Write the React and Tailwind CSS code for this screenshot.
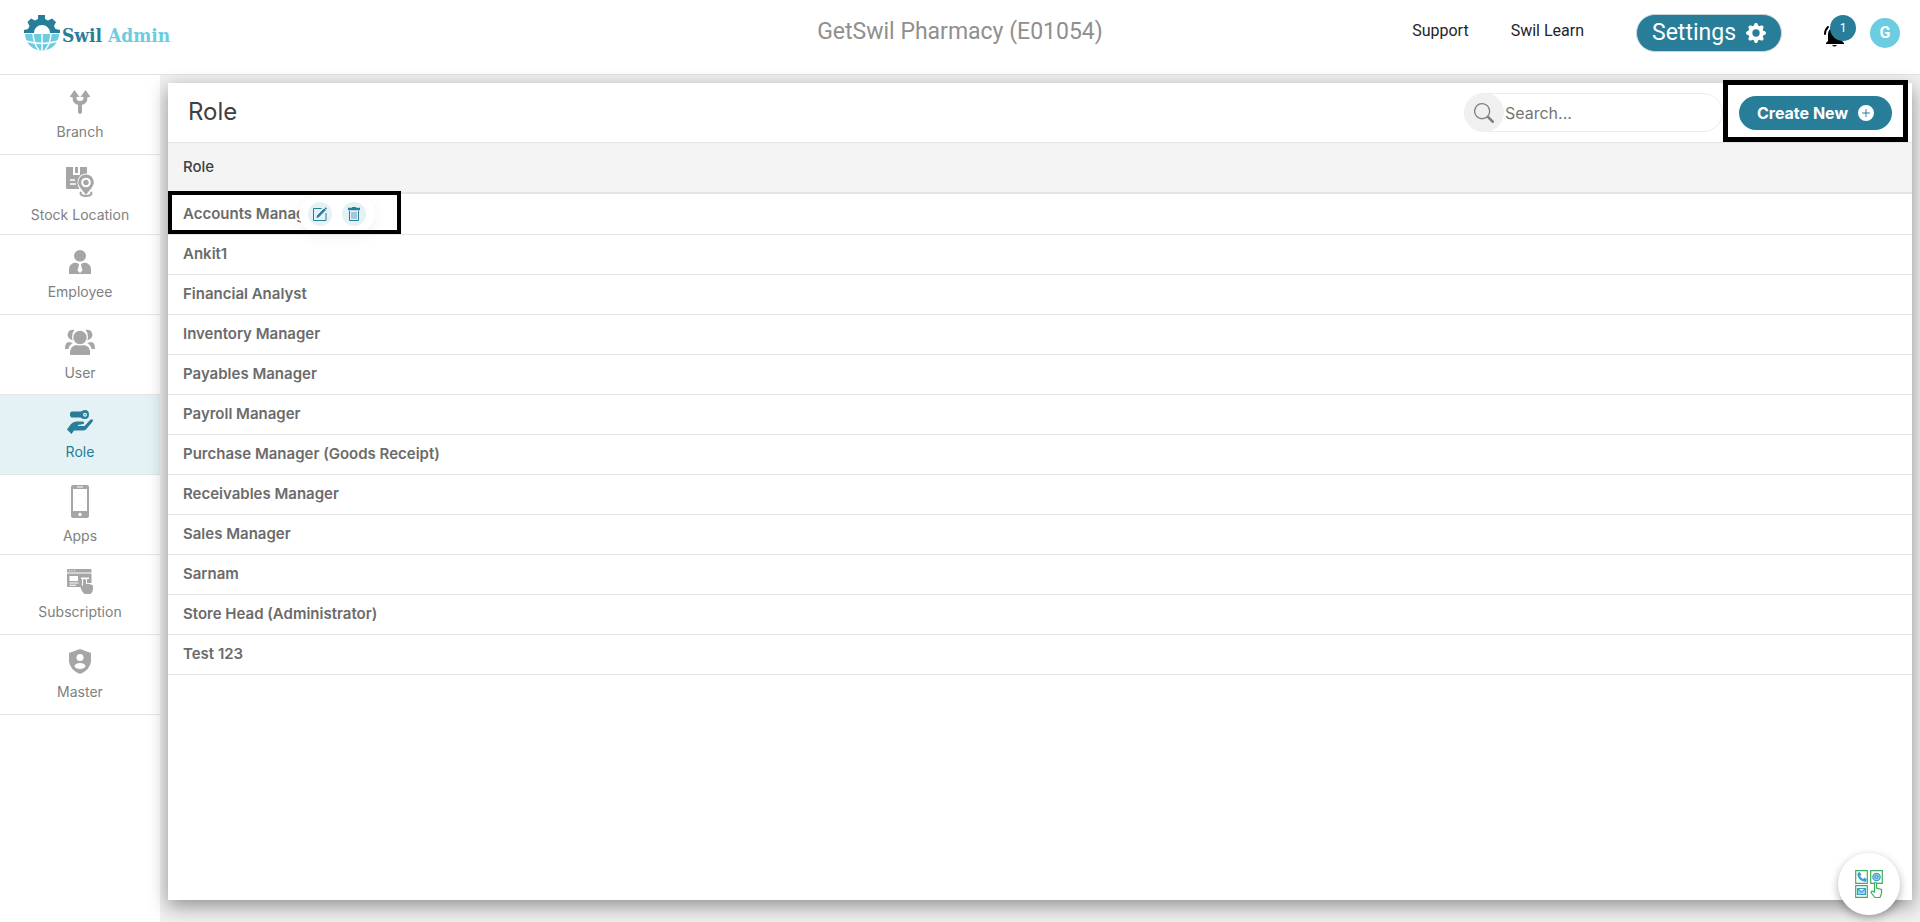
import React, { useState } from 'react';
import { BsGearFill, BsSearch, BsPlusCircleFill } from 'react-icons/bs';

const menuItems = [
	{ name: 'Branch', Icon: BranchIcon },
	{ name: 'Stock Location', Icon: StockLocationIcon },
	{ name: 'Employee', Icon: EmployeeIcon },
	{ name: 'User', Icon: UserIcon },
	{ name: 'Role', Icon: RoleIcon },
	{ name: 'Apps', Icon: AppsIcon },
	{ name: 'Subscription', Icon: SubscriptionIcon },
	{ name: 'Master', Icon: MasterIcon },
];

const roles = [
	'Accounts Manager',
	'Ankit1',
	'Financial Analyst',
	'Inventory Manager',
	'Payables Manager',
	'Payroll Manager',
	'Purchase Manager (Goods Receipt)',
	'Receivables Manager',
	'Sales Manager',
	'Sarnam',
	'Store Head (Administrator)',
	'Test 123',
];

export default function App() {
	const [activeMenu, SetActiveMenu] = useState('Role');
	const [search, SetSearch] = useState('');

	const visibleRoles = roles.filter((role) => role.toLowerCase().includes(search.toLowerCase()));

	return (
		<div className="flex min-h-screen flex-col bg-[#f0f0f0] font-['Inter',sans-serif]">
			<Header />
			<div className="flex flex-1">
				<Sidebar activeMenu={activeMenu} SetActiveMenu={SetActiveMenu} />
				<main className="flex flex-1 px-2 pt-2 pb-[22px]">
					<section className="flex-1 bg-white shadow-[0_6px_18px_rgba(0,0,0,0.4)]">
						<div className="flex h-[60px] items-center justify-between border-b border-[#e5e5e5] px-5">
							<h1 className="pb-0.5 text-2xl text-[#404040]">Role</h1>
							<div className="flex items-center gap-4">
								<SearchBox search={search} SetSearch={SetSearch} />
								<div className="relative">
									<button className="flex h-[34px] items-center gap-2.5 rounded-full bg-[#287d98] px-[18px] text-base font-bold text-white">
										Create New
										<BsPlusCircleFill size={16} />
									</button>
									<div className="pointer-events-none absolute -inset-x-4 -top-4 -bottom-3 border-5 border-black"></div>
								</div>
							</div>
						</div>
						<RoleTable roleList={visibleRoles} />
					</section>
				</main>
			</div>
			<button
				aria-label="Contact us"
				className="fixed right-5 bottom-[7px] flex size-[62px] items-center justify-center rounded-full bg-white shadow-[0_3px_8px_rgba(0,0,0,0.3)]"
			>
				<ContactIcon />
			</button>
		</div>
	)
}

function Header() {
	return (
		<header className="grid h-[75px] grid-cols-[1fr_auto_1fr] items-center border-b border-[#e2e2e2] bg-white px-5 pb-2 font-['Roboto',sans-serif]">
			<a href="#" className="flex items-center pl-1">
				<LogoIcon />
				<span className="pt-1 pl-0.5 font-['DejaVu_Serif_Condensed','DejaVu_Serif',serif] text-[19px] font-bold text-[#287d98]">
					Swil <span className="text-[#6ccce0]">Admin</span>
				</span>
			</a>
			<div className="pb-0.5 text-[23px] text-[#8f8f8f]">GetSwil Pharmacy (E01054)</div>
			<div className="flex items-center justify-end">
				<nav className="mr-[52px] flex gap-[42px] pb-1 text-base text-[#212529]">
					<a href="#">Support</a>
					<a href="#">Swil Learn</a>
				</nav>
				<button className="mr-[42px] flex h-[38px] items-center gap-2.5 rounded-full border border-[#c9d5da] bg-[#287d98] px-[15px] text-[23px] text-white">
					Settings
					<BsGearFill size={20} />
				</button>
				<button aria-label="Notifications" className="relative mr-3.5 flex h-7 w-8 items-end">
					<BellIcon />
					<span className="absolute -top-1 right-0 flex size-[26px] items-center justify-center rounded-full bg-[#287d98] text-xs text-white">1</span>
				</button>
				<button className="flex size-[30px] items-center justify-center rounded-full bg-[#6ccce0] text-base font-bold text-white">G</button>
			</div>
		</header>
	)
}

function Sidebar({ activeMenu, SetActiveMenu }) {
	return (
		<nav className="w-40 shrink-0 bg-white">
			{menuItems.map(({ name, Icon }) => {
				const color = name === activeMenu ? 'bg-[#e4f2f6] text-[#287d98]' : 'text-[#a6a6a6]';
				return (
					<button
						key={name}
						onClick={() => SetActiveMenu(name)}
						className={`flex h-20 w-full flex-col items-center justify-center gap-2 border-b border-[#e5e5e5] pt-0.5 ${color}`}
					>
						<Icon />
						<span className={name === activeMenu ? 'text-sm' : 'text-sm text-[#808080]'}>{name}</span>
					</button>
				)
			})}
		</nav>
	)
}

function SearchBox({ search, SetSearch }) {
	return (
		<label className="flex h-[39px] w-[259px] items-center overflow-hidden rounded-full border border-[#ececec] bg-white">
			<span className="flex size-[39px] shrink-0 items-center justify-center rounded-full bg-[#f0f0f0] text-[#808080]">
				<BsSearch size={20} />
			</span>
			<input
				type="text"
				aria-label="Search"
				value={search}
				onChange={(e) => SetSearch(e.target.value)}
				placeholder="Search..."
				className="w-full pl-px text-base text-[#404040] outline-none placeholder:text-[#757575]"
			/>
		</label>
	)
}

function RoleTable({ roleList }) {
	return (
		<table className="w-full border-separate border-spacing-0 border-b border-[#e5e5e5] text-left text-[15px]">
			<thead>
				<tr>
					<th className="h-[51px] border-b-2 border-[#e5e5e5] bg-[#f4f4f4] px-[15px] font-medium text-[#404040]">Role</th>
				</tr>
			</thead>
			<tbody>
				{roleList.map((role, idx) => (
					<tr key={role}>
						<td className={`relative h-10 border-[#e5e5e5] px-[15px] font-semibold text-[#6b6b6b] ${idx > 0 ? 'border-t' : ''}`}>
							{role}
							{idx === 0 && <RowActions />}
						</td>
					</tr>
				))}
			</tbody>
		</table>
	)
}

function RowActions() {
	return (
		<>
			<div className="absolute top-0.5 left-[131px] flex h-9 items-center gap-2.5 rounded-full bg-white px-[9px] shadow-[0_5px_15px_rgba(0,0,0,0.06)]">
				<button aria-label="Edit" className="flex size-6 items-center justify-center rounded-full bg-[#e4f2f6] text-[#287d98]">
					<EditIcon />
				</button>
				<button aria-label="Delete" className="flex size-6 items-center justify-center rounded-full bg-[#e4f2f6] text-[#287d98]">
					<TrashIcon />
				</button>
			</div>
			<div className="pointer-events-none absolute -top-[3px] bottom-0 left-0 w-[233px] border-4 border-black"></div>
		</>
	)
}

function LogoIcon() {
	return (
		<svg width="36" height="36" viewBox="0 0 36 36" fill="none">
			<path
				fill="#287d98"
				d="M0 18v-3l4-1 1.500-3-2-4L7 3.500l4 2 3-1.500V0h7v4l3 1.500 4-2L32 7l-2 4 1.500 3 4.500 1v3H26a8 8 0 0 0-16 0z"
			/>
			<path fill="#6ccce0" d="M1 19h34a17 16.500 0 0 1-34 0z" />
			<path stroke="#fff" strokeWidth="1.500" d="M18 19v17M9 19q1 11 6 16M27 19q-1 11-6 16M2 26q16 5 32 0" />
		</svg>
	)
}

function BellIcon() {
	return (
		<svg width="24" height="22" viewBox="0 0 24 22" fill="none">
			<path d="M1 9q0-4 3-7" stroke="#000" strokeWidth="2" strokeLinecap="round" />
			<path d="M4 16V9a7 7 0 0 1 14 0v7l2 2v1H2v-1z" fill="#000" />
			<path d="M8 20h5q-2.500 3-5 0z" fill="#000" />
		</svg>
	)
}

function BranchIcon() {
	return (
		<svg width="20" height="24" viewBox="0 0 20 24" fill="none">
			<path d="M4.500 5v2.500Q4.500 13 10 13t5.500-5.500V5M10 13v9" stroke="currentColor" strokeWidth="4" strokeLinecap="round" />
			<path d="M4.500 0 9.500 7H-.5zM15.500 0l5 7h-10z" fill="currentColor" />
		</svg>
	)
}

function StockLocationIcon() {
	return (
		<svg width="28" height="30" viewBox="0 0 28 30" fill="currentColor">
			<path d="M0 0h7v8h7V0h7v6.500q-9 0-9.500 9 0 3 2 6.500H1q-1 0-1-1z" />
			<path d="M9 0h3v6H9z" />
			<path d="M4 13h5M4 17h6" stroke="#fff" strokeWidth="1.500" />
			<path fillRule="evenodd" d="M20 7.500a7.800 7.800 0 0 1 7.800 8c0 4-4 7-7.800 12.500-3.800-5.500-7.800-8.500-7.800-12.500a7.800 7.800 0 0 1 7.800-8zm0 3.200a4.800 4.800 0 1 0 0 9.600 4.800 4.800 0 0 0 0-9.600z" />
			<circle cx="20" cy="15.500" r="2.700" />
			<path d="M15.500 25q-2 1.500 0 3 4.500 2 9 0 2-1.500 0-3" fill="none" stroke="currentColor" strokeWidth="2" />
		</svg>
	)
}

function EmployeeIcon() {
	return (
		<svg width="22" height="24" viewBox="0 0 22 24" fill="currentColor">
			<ellipse cx="11" cy="5.800" rx="6" ry="5.800" />
			<path d="M0 24v-5q0-5 6-6.500 5 2 10 0 6 1.500 6 6.500v5z" />
			<path d="M9 12.500h4l-1 2.500 1.500 5.500L11 23l-2.500-2.500L10 15z" fill="#fff" />
		</svg>
	)
}

function UserIcon() {
	return (
		<svg width="30" height="26" viewBox="0 0 30 26" fill="currentColor">
			<circle cx="15" cy="8.500" r="6.700" />
			<path d="M5 26q-.500-10 7-10 3 1 6 0 8 0 7 10z" />
			<path d="M9.500.800Q7 4 7 8q0 2 1 3.500Q3 10 2.500 6 3 0 9.500.800zM20.500.800Q23 4 23 8q0 2-1 3.500 5-1.500 5.500-5.500Q27 0 20.500.800z" />
			<path d="M0 20q0-7 4-7 2 .500 4 1-4 2-4.500 6zM30 20q0-7-4-7-2 .500-4 1 4 2 4.500 6z" />
		</svg>
	)
}

function RoleIcon() {
	return (
		<svg width="26" height="24" viewBox="0 0 26 24" fill="currentColor">
			<path fillRule="evenodd" d="M4.500 1.500H14Q15.500 0 18 0q4 0 4 4.500T18 9q-3 0-4.500-1.500h-9L3 6V3zM18 2.700a2 2 0 1 0 0 4 2 2 0 0 0 0-4z" />
			<circle cx="18" cy="4.700" r=".8" />
			<path d="M0 19.500 4 14q3-3 6-2.500h6q2 1 .500 2.500L11 15v1h6.500L23 10q2.500-1.500 3 0 0 1.500-2 3.500l-5 6q-1 1-3 1H7L4.500 24z" />
		</svg>
	)
}

function AppsIcon() {
	return (
		<svg width="18" height="33" viewBox="0 0 18 33">
			<path fill="currentColor" fillRule="evenodd" d="M2 0h14q2 0 2 2v29q0 2-2 2H2q-2 0-2-2V2q0-2 2-2zM2 4v22h14V4zM6 1.500v1h6v-1zM9 27.800a1.700 1.700 0 1 0 0 3.400 1.700 1.700 0 0 0 0-3.400z" />
		</svg>
	)
}

function SubscriptionIcon() {
	return (
		<svg width="26" height="25" viewBox="0 0 26 25" fill="currentColor">
			<path d="M1 0h22q1.500 0 1.500 1v2.500H0V1q0-1 1-1z" />
			<path fillRule="evenodd" d="M0 4.500h24.500V14H20V9h-5v9H1q-1 0-1-1zM2.500 7v5H11V7zM2.500 13.500v1h9v-1zM2.500 15.800v1H9v-1z" />
			<path d="M2 1.800h1M4.500 1.800h1M7 1.800h1" stroke="#fff" strokeWidth="1" />
			<path d="M14 8.500h8v1.500h-8z" fill="#fff" />
			<path d="M16 11q1.500-2 3 0v4q3-1 7 1.500V20q0 3-2.500 5h-6Q14 22 13 17q0-2 3 0z" />
		</svg>
	)
}

function MasterIcon() {
	return (
		<svg width="22" height="25" viewBox="0 0 22 25">
			<path fill="currentColor" d="M11 0l11 4v8.500Q21 21 11 25 1 21 0 12.500V4z" />
			<circle cx="11" cy="8.500" r="3.500" fill="#fff" />
			<ellipse cx="11" cy="17" rx="5.500" ry="3" fill="#fff" />
		</svg>
	)
}

function EditIcon() {
	return (
		<svg width="14" height="14" viewBox="0 0 14 14" fill="none" stroke="currentColor">
			<path d="M8.500 1.500H.5v12h12.500V6" />
			<path d="M4 10.500l.5-2L11 2l1.200 1.200L5.500 10z" fill="currentColor" />
			<path d="M12 .8l1.500 1.500" strokeWidth="1.500" />
		</svg>
	)
}

function TrashIcon() {
	return (
		<svg width="12" height="14" viewBox="0 0 12 14" fill="none" stroke="currentColor">
			<path d="M0 2h12" strokeWidth="2.500" />
			<path d="M4 .5h4" />
			<path d="M1.500 4v9.500h9V4" />
			<path d="M4 5v7M6 5v7M8 5v7" opacity=".7" />
		</svg>
	)
}

function ContactIcon() {
	return (
		<svg width="28" height="28" viewBox="0 0 28 28" fill="none">
			<path d="M.7.700h11.600v12.600H.7zM15.700.700h11.600v12.600H15.700zM.7 15.700h11.600v11.600H.7z" stroke="#3fae5f" strokeWidth="1.200" />
			<path d="M2.500 3q-1 7 8 9l1.500-2.500L9.500 7.500 8 9Q5.500 7.500 5 6l1.500-1.500L4.500 2z" fill="#3b9fd0" />
			<circle cx="21.500" cy="7" r="3.700" fill="#9fd3ec" stroke="#3b9fd0" strokeWidth="1.200" />
			<circle cx="21.500" cy="7" r="1.500" stroke="#3b9fd0" strokeWidth="1.200" />
			<path d="M2.500 18.500h8v6h-8zM2.500 18.500l4 3.500 4-3.500" fill="#9fd3ec" stroke="#3b9fd0" strokeWidth="1.200" />
			<path d="M19.500 22v-9q1-1.500 2 0v5l5 1.500v4l-1.500 4h-5l-4-5 1-1.500z" fill="#fff" stroke="#3fae5f" strokeWidth="1.200" />
		</svg>
	)
}
